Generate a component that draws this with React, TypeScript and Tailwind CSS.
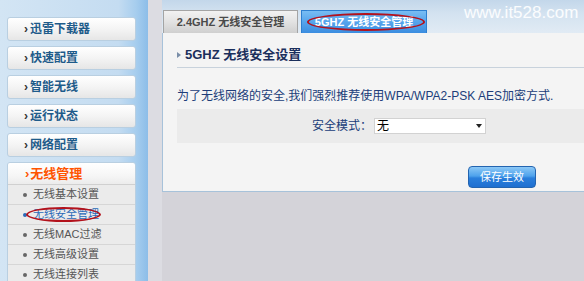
import React from "react";

const navItems = ["迅雷下载器", "快速配置", "智能无线", "运行状态", "网络配置"];
const subItems = ["无线基本设置", "无线安全管理", "无线MAC过滤", "无线高级设置", "无线连接列表"];

export default function App() {
  return (
    <div
      className="relative w-[584px] h-[281px] flex overflow-hidden bg-[#d4d3d9]"
      style={{ fontFamily: '"Liberation Sans", "Noto Sans CJK SC", sans-serif' }}
    >
      {/* Sidebar */}
      <aside className="w-[148px] h-full shrink-0 bg-[linear-gradient(to_right,#d3e5f4_0%,#c4dcf1_80%,#a6cdee_92%,#8cbde8_100%)] pt-[17px] pl-[7px] flex flex-col gap-[5px]">
        {navItems.map((t) => (
          <div
            key={t}
            className="w-[129px] h-[24px] shrink-0 rounded-[3px] border border-[#b9cfe1] bg-[linear-gradient(to_bottom,#ffffff_0%,#f4f4f4_50%,#e6e6e6_100%)] flex items-center pl-[16px] text-[12px] font-bold leading-none"
          >
            <span className="text-[#333] mr-[2px]">›</span>
            <span className="text-[#1e5b8a]">{t}</span>
          </div>
        ))}
        <div className="relative w-[129px] shrink-0 rounded-t-[3px] border border-[#b9cfe1] overflow-hidden">
          <div className="h-[22px] bg-[linear-gradient(to_bottom,#ffffff_0%,#f6f6f6_60%,#ececec_100%)] border-b border-[#d0d0d0] flex items-center pl-[17px] text-[13px] font-bold leading-none text-[#ff5400]">
            <span className="mr-[1px]">›</span>
            <span>无线管理</span>
          </div>
          {subItems.map((t, i) => (
            <div
              key={t}
              className="h-[20px] bg-[#ebebeb] border-b border-[#d6d6d6] flex items-center pl-[15px] text-[11px] leading-none"
            >
              <span className={`w-[4px] h-[4px] rounded-full mr-[6px] ${i === 1 ? "bg-[#2a6ab8]" : "bg-[#666]"}`} />
              <span className={i === 1 ? "text-[#2a6ab8]" : "text-[#555]"}>{t}</span>
            </div>
          ))}
          <div className="absolute left-[18px] top-[44px] w-[75px] h-[15px] rounded-[50%] border-[2.5px] border-[#b3121c]" />
        </div>
      </aside>

      {/* Gray strip */}
      <div className="w-[14px] h-full shrink-0 bg-[#dcdce2]" />

      {/* Main */}
      <main className="flex-1 flex flex-col">
        <div className="relative h-[33px] bg-[linear-gradient(to_bottom,#c3d7ea_0%,#d3e2f0_40%,#e1ebf4_100%)] flex items-end pl-[1px] gap-[3px]">
          <div className="w-[135px] h-[23px] border border-b-0 border-[#a4a4a4] bg-[linear-gradient(to_bottom,#f2f2f2_0%,#e2e2e2_50%,#cfcfcf_100%)] flex items-center justify-center text-[11px] font-bold text-[#4a4a4a] leading-none">
            2.4GHZ 无线安全管理
          </div>
          <div className="relative w-[126px] h-[23px] border border-b-0 border-[#2d7fd0] bg-[linear-gradient(to_bottom,#78bdf3_0%,#55a4ec_50%,#3b8de0_100%)] flex items-center justify-center text-[11px] font-bold text-white leading-none">
            5GHZ 无线安全管理
            <div className="absolute left-[5px] top-[2px] w-[118px] h-[18px] rounded-[50%] border-[2.5px] border-[#b3121c]" />
          </div>
          <div className="absolute left-[302px] top-[4px] text-[17px] leading-none text-white/90">
            www.it528.com
          </div>
        </div>

        <div className="h-[159px] bg-[#f4f4f4] border-l border-b border-[#a7c2da] pl-[14px] flex flex-col">
          <div className="h-[35px] border-b border-[#c8d2dc] flex items-end pb-[6px]">
            <span className="w-0 h-0 border-y-[3.5px] border-y-transparent border-l-[4px] border-l-[#7a8ea8] mr-[4px] mb-[3px]" />
            <span className="text-[13px] font-bold leading-none text-[#1b2f5c]">5GHZ 无线安全设置</span>
          </div>
          <div className="h-[41px] flex items-center pt-[14px] text-[12px] leading-none text-[#203d79]">
            为了无线网络的安全,我们强烈推荐使用WPA/WPA2-PSK AES加密方式.
          </div>
          <div className="mt-[0px] h-[34px] bg-[#ebebeb] flex items-center pl-[135px]">
            <span className="text-[12px] leading-none text-[#203d79] mr-[2px]">安全模式：</span>
            <div className="w-[112px] h-[16px] bg-white border border-[#d2d2d2] flex items-center justify-between pl-[2px] pr-[3px]">
              <span className="text-[12px] leading-none text-black">无</span>
              <span className="w-0 h-0 border-x-[3.5px] border-x-transparent border-t-[4px] border-t-[#222]" />
            </div>
          </div>
          <div className="flex-1 flex items-start pt-[23px] pl-[291px]">
            <div className="w-[68px] h-[22px] rounded-[4px] border border-[#2364b0] bg-[linear-gradient(to_bottom,#8cc8f6_0%,#4ea2ec_45%,#2a7fdc_55%,#1f6fd0_100%)] flex items-center justify-center text-[11px] leading-none text-white">
              保存生效
            </div>
          </div>
        </div>
      </main>
    </div>
  );
}
